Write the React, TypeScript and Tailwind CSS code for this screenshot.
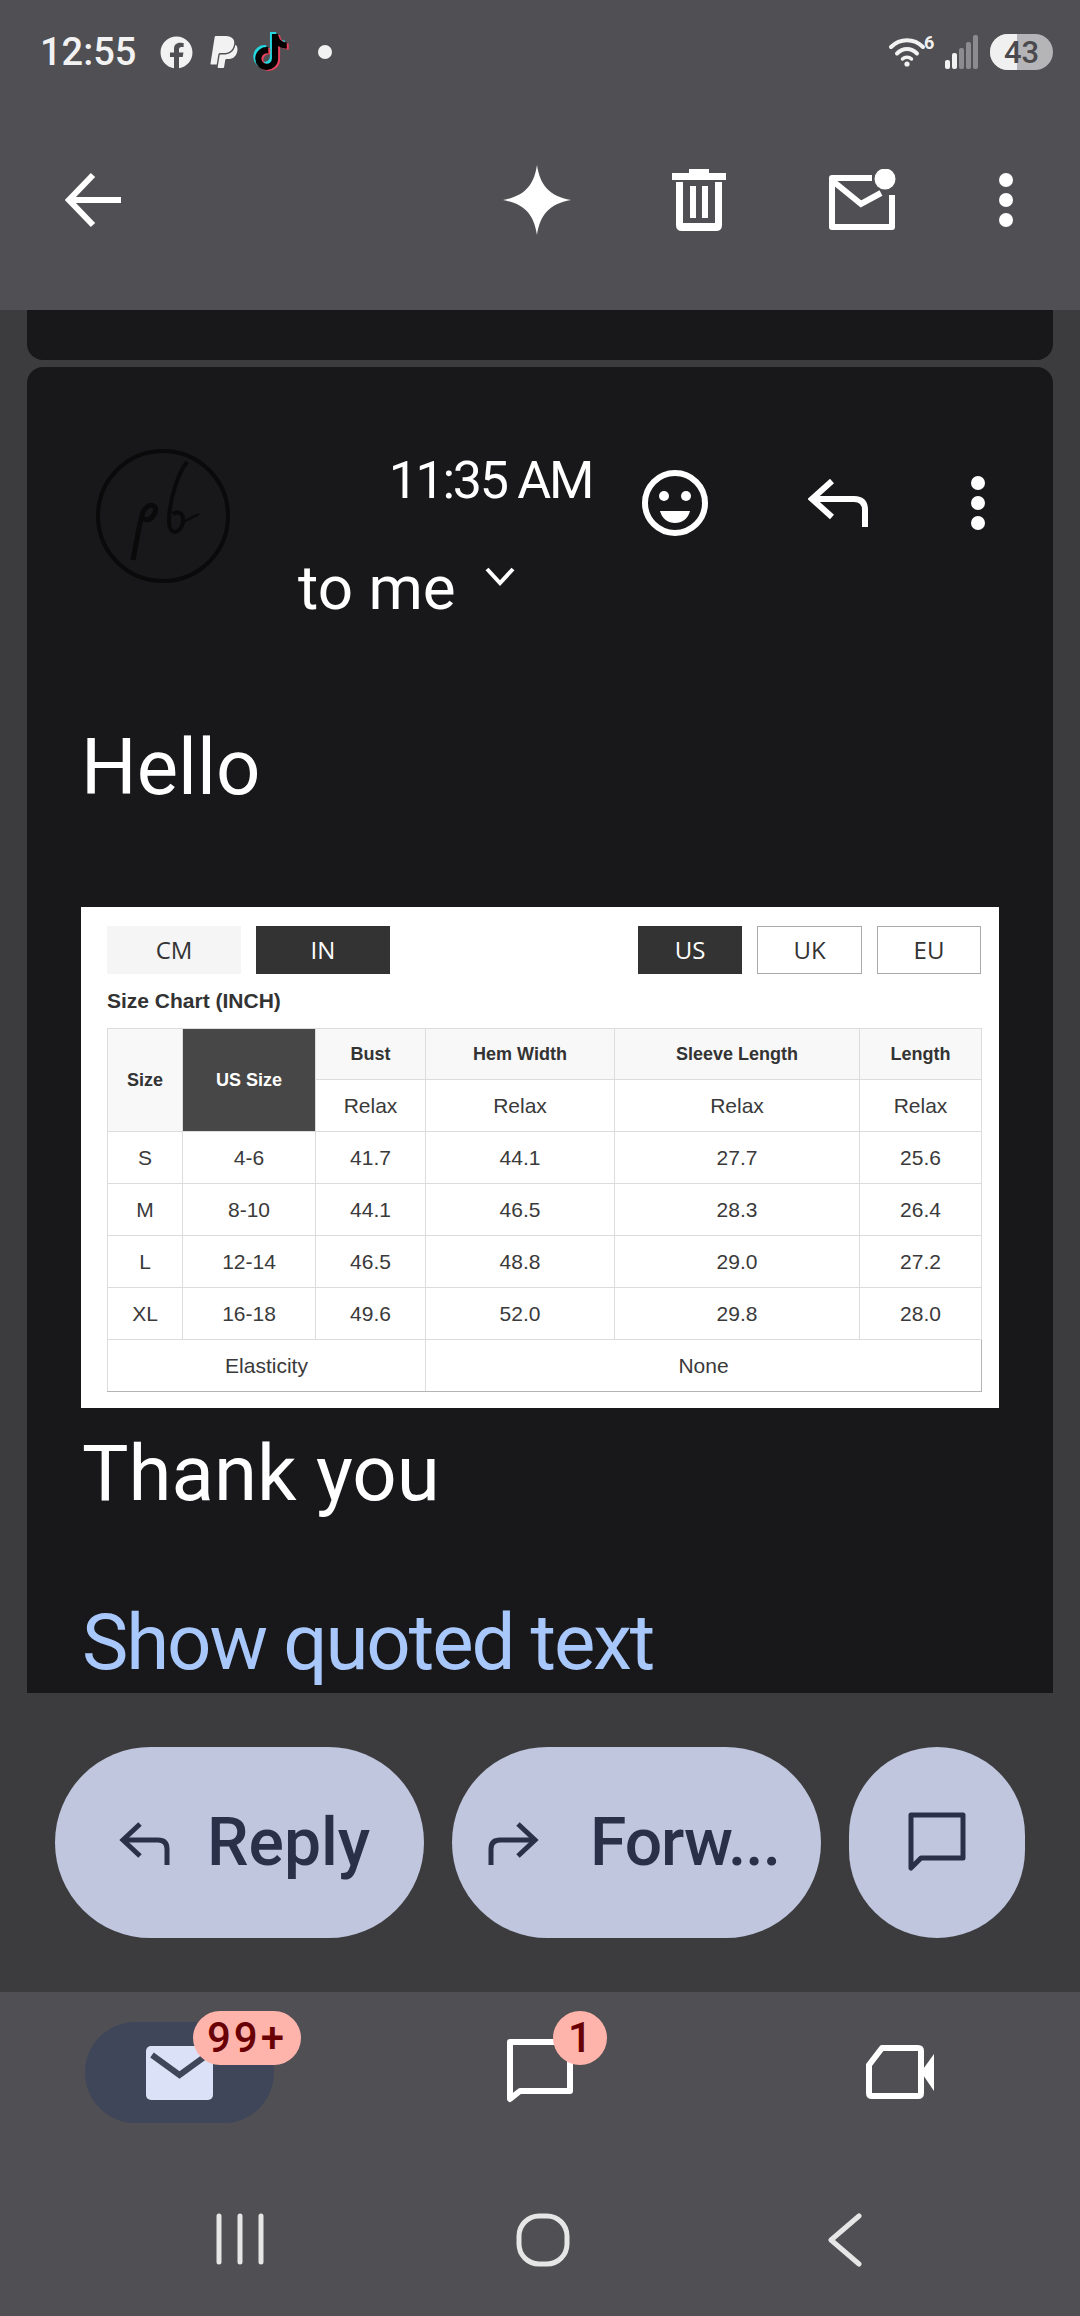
import { FaFacebook, FaPaypal, FaTiktok } from "react-icons/fa";

const ROWS = [
  ["S", "4-6", "41.7", "44.1", "27.7", "25.6"],
  ["M", "8-10", "44.1", "46.5", "28.3", "26.4"],
  ["L", "12-14", "46.5", "48.8", "29.0", "27.2"],
  ["XL", "16-18", "49.6", "52.0", "29.8", "28.0"],
];

function Dots({ className }: { className?: string }) {
  return (
    <svg viewBox="0 0 14 54" className={className} fill="currentColor">
      <circle cx="7" cy="7" r="7" />
      <circle cx="7" cy="27" r="7" />
      <circle cx="7" cy="47" r="7" />
    </svg>
  );
}

function StatusBar() {
  return (
    <div className="flex h-[104px] items-center pl-[40px] pr-[27px] text-[#f2f2f2]">
      <span className="w-[120px] font-['Roboto',sans-serif] text-[38px] font-medium leading-none">12:55</span>
      <FaFacebook className="h-[33px] w-[33px]" />
      <FaPaypal className="ml-[17px] h-[36px] w-[28px]" />
      {/* tiktok note: cyan and red copies sit behind the black one */}
      <div className="relative ml-[16px] h-[38px] w-[34px]">
        <FaTiktok className="absolute left-[-1px] top-[-1px] h-[36px] w-[32px] text-[#25d8e0]" />
        <FaTiktok className="absolute left-[3px] top-[2px] h-[36px] w-[32px] text-[#e8425c]" />
        <FaTiktok className="absolute left-[1px] top-[1px] h-[36px] w-[32px] text-black" />
      </div>
      <div className="ml-[30px] h-[14px] w-[14px] rounded-full bg-[#f2f2f2]" />
      <div className="relative ml-auto h-[34px] w-[48px]">
        <svg viewBox="0 0 38 34" className="h-[34px] w-[38px]" fill="none" stroke="currentColor" strokeLinecap="round">
          <path d="M3 12 C 12 3, 26 3, 35 12" strokeWidth="4" />
          <path d="M9 18.5 C 15 12.5, 23 12.5, 29 18.5" strokeWidth="4" />
          <path d="M14.5 24 C 17 21.5, 21 21.5, 23.5 24" strokeWidth="3.5" />
          <circle cx="19" cy="29" r="2.6" fill="currentColor" stroke="none" />
        </svg>
        <span className="absolute left-[36px] top-[-2px] font-['Roboto',sans-serif] text-[18px] font-bold leading-[20px]">6</span>
      </div>
      <svg viewBox="0 0 33 34" className="ml-[9px] h-[34px] w-[33px]">
        <rect x="0" y="25" width="5" height="9" rx="2" fill="#f2f2f2" />
        <rect x="7" y="18" width="5" height="16" rx="2" fill="#f2f2f2" />
        <rect x="14" y="13" width="5" height="21" rx="2" fill="#8c8c90" />
        <rect x="21" y="7" width="5" height="27" rx="2" fill="#8c8c90" />
        <rect x="28" y="0" width="5" height="34" rx="2" fill="#8c8c90" />
      </svg>
      <div className="relative ml-[12px] flex h-[36px] w-[63px] items-center justify-center overflow-hidden rounded-full bg-[#b5b5b8] font-['Roboto',sans-serif] text-[31px] font-medium text-[#4a4a4e]">
        <div className="absolute inset-y-0 left-0 w-[27px] bg-[#f0f0f0]" />
        <span className="relative leading-none">43</span>
      </div>
    </div>
  );
}

function Toolbar() {
  return (
    <div className="flex h-[192px] items-center text-white">
      <svg viewBox="0 0 56 56" className="ml-[65px] h-[56px] w-[56px]" fill="none" stroke="currentColor" strokeWidth="6">
        <path d="M28 3 L4 28 L28 53" />
        <path d="M4 28 H56" />
      </svg>
      <svg viewBox="0 0 68 70" className="ml-[382px] h-[70px] w-[68px]" fill="currentColor">
        <path d="M34 0 C 37 20 46 31 68 35 C 46 39 37 50 34 70 C 31 50 22 39 0 35 C 22 31 31 20 34 0 Z" />
      </svg>
      <svg viewBox="0 0 56 62" className="ml-[100px] h-[62px] w-[56px]" fill="currentColor">
        <path d="M18 0 H38 V4 H55 V11 H1 V4 H18 Z" />
        <path d="M5 13 H12 V54 H44 V13 H51 V56 Q51 62 45 62 H11 Q5 62 5 56 Z" />
        <rect x="19" y="17" width="6" height="32" />
        <rect x="31" y="17" width="6" height="32" />
      </svg>
      <svg viewBox="0 0 70 62" className="ml-[102px] h-[62px] w-[70px]" fill="none" stroke="currentColor" strokeWidth="6">
        <path d="M43 9 H3 V58 H63 V26" strokeLinejoin="round" />
        <path d="M5 13 L32 35 L52 24" />
        <circle cx="56" cy="10" r="10.5" fill="currentColor" stroke="none" />
      </svg>
      <Dots className="ml-[100px] h-[54px] w-[14px]" />
    </div>
  );
}

function SizeChart() {
  const th = "border border-[#dcdcdc] bg-[#f8f8f8] p-0 text-[18px] font-bold text-[#333]";
  const td = "border border-[#dcdcdc] p-0 text-[21px] font-normal text-[#3a3a3a]";
  return (
    <div className="mx-[54px] mt-[94px] flex h-[501px] flex-col bg-white pl-[26px] pr-[18px] pt-[19px] font-['Liberation_Sans',sans-serif]">
      <div className="flex h-[48px] font-['Open_Sans',sans-serif] text-[24px]">
        <div className="flex w-[134px] items-center justify-center bg-[#f5f5f5] text-[#333]">CM</div>
        <div className="ml-[15px] flex w-[134px] items-center justify-center bg-[#333] text-white">IN</div>
        <div className="ml-auto flex w-[104px] items-center justify-center bg-[#333] text-white">US</div>
        <div className="ml-[15px] flex w-[105px] items-center justify-center border border-[#aaa] text-[#333]">UK</div>
        <div className="ml-[15px] flex w-[104px] items-center justify-center border border-[#aaa] text-[#333]">EU</div>
      </div>
      <div className="mt-[13px] h-[27px] text-[21px] font-bold leading-[27px] text-[#333]">Size Chart (INCH)</div>
      <table className="mt-[14px] h-[364px] w-[874px] table-fixed border-collapse text-center">
        <colgroup>
          <col className="w-[75px]" />
          <col className="w-[133px]" />
          <col className="w-[110px]" />
          <col className="w-[189px]" />
          <col className="w-[245px]" />
          <col className="w-[122px]" />
        </colgroup>
        <tbody>
          <tr className="h-[51px]">
            <th rowSpan={2} className={th}>Size</th>
            <th rowSpan={2} className="border border-[#dcdcdc] bg-[#474747] p-0 text-[18px] font-bold text-white">US Size</th>
            <th className={th}>Bust</th>
            <th className={th}>Hem Width</th>
            <th className={th}>Sleeve Length</th>
            <th className={th}>Length</th>
          </tr>
          <tr className="h-[52px]">
            <td className={td}>Relax</td>
            <td className={td}>Relax</td>
            <td className={td}>Relax</td>
            <td className={td}>Relax</td>
          </tr>
          {ROWS.map((row) => (
            <tr key={row[0]} className="h-[52px]">
              {row.map((cell, i) => (
                <td key={i} className={td}>{cell}</td>
              ))}
            </tr>
          ))}
          <tr className="h-[52px]">
            <td colSpan={3} className="border border-[#dcdcdc] border-b-[#b4b4b4] p-0 text-[21px] text-[#3a3a3a]">Elasticity</td>
            <td colSpan={3} className="border border-[#dcdcdc] border-b-[#b4b4b4] border-r-[#b4b4b4] p-0 text-[21px] text-[#3a3a3a]">None</td>
          </tr>
        </tbody>
      </table>
    </div>
  );
}

function MessageCard() {
  return (
    <div className="mx-[27px] mt-[7px] h-[1326px] overflow-hidden rounded-t-[16px] bg-[#18181b] font-['Roboto',sans-serif] text-white">
      <div className="flex pl-[68px] pt-[81px]">
        {/* sender avatar, a near black disc with a signature */}
        <svg viewBox="0 0 136 136" className="h-[136px] w-[136px] shrink-0 blur-[0.6px]" fill="none" stroke="#0a0a0b">
          <circle cx="68" cy="68" r="65" strokeWidth="4" />
          <path d="M38 112 C 42 92 44 76 48 64 C 54 52 66 58 58 68 C 54 74 48 72 46 68" strokeWidth="5" />
          <path d="M92 14 C 84 24 74 50 74 74 C 74 88 86 86 88 74 C 89 66 84 62 78 66" strokeWidth="4" />
          <path d="M88 74 L 104 66" strokeWidth="2" />
        </svg>
        <div className="ml-[67px] w-[294px] pt-[3px]">
          <div className="text-right text-[52px] leading-[60px] tracking-[-2.3px]">11:35 AM</div>
          <div className="mt-[39px] flex text-[62px] leading-[76px]">
            to me
            <svg viewBox="0 0 30 20" className="ml-[29px] mt-[17px] h-[20px] w-[30px]" fill="none" stroke="currentColor" strokeWidth="4">
              <path d="M2 2 L15 16 L28 2" />
            </svg>
          </div>
        </div>
        <div className="mt-[22px] flex h-[66px] items-center pl-[50px]">
          <svg viewBox="0 0 66 66" className="h-[66px] w-[66px]" fill="none" stroke="currentColor" strokeWidth="6">
            <circle cx="33" cy="33" r="30" />
            <circle cx="22" cy="26" r="5" fill="currentColor" stroke="none" />
            <circle cx="44" cy="26" r="5" fill="currentColor" stroke="none" />
            <path d="M18 41 H48 C 46 49 40 53 33 53 C 26 53 20 49 18 41 Z" fill="currentColor" stroke="none" />
          </svg>
          <svg viewBox="0 0 60 48" className="ml-[100px] h-[48px] w-[60px]" fill="none" stroke="currentColor" strokeWidth="6">
            <path d="M24 2 L4 20 L24 38" />
            <path d="M4 20 H46 Q57 20 57 31 V48" />
          </svg>
          <Dots className="ml-[103px] h-[54px] w-[14px]" />
        </div>
      </div>
      <div className="mt-[97px] pl-[54px] text-[78px] leading-[90px]">Hello</div>
      <SizeChart />
      <div className="mt-[21px] pl-[55px] text-[78px] leading-[90px]">Thank you</div>
      <div className="mt-[79px] pl-[55px] text-[78px] leading-[90px] tracking-[-2.1px] text-[#a8c7fa]">Show quoted text</div>
    </div>
  );
}

function ActionButtons() {
  return (
    <div className="flex flex-1 items-start gap-[28px] pl-[55px] pt-[54px] font-['Roboto',sans-serif] text-[#2a3047]">
      <div className="flex h-[191px] w-[369px] items-center rounded-full bg-[#bfc6de] pl-[63px]">
        <svg viewBox="0 0 52 44" className="h-[44px] w-[52px]" fill="none" stroke="currentColor" strokeWidth="5">
          <path d="M22 3 L5 19 L22 35" />
          <path d="M5 19 H40 Q49 19 49 28 V44" />
        </svg>
        <span className="ml-[37px] text-[66px] font-medium">Reply</span>
      </div>
      <div className="flex h-[191px] w-[369px] items-center rounded-full bg-[#bfc6de] pl-[36px]">
        <svg viewBox="0 0 52 44" className="h-[44px] w-[52px]" fill="none" stroke="currentColor" strokeWidth="5">
          <path d="M30 3 L47 19 L30 35" />
          <path d="M47 19 H12 Q3 19 3 28 V44" />
        </svg>
        <span className="ml-[50px] text-[66px] font-medium tracking-[-1px]">Forw...</span>
      </div>
      <div className="flex h-[191px] w-[176px] items-center justify-center rounded-full bg-[#bfc6de]">
        <svg viewBox="0 0 58 62" className="h-[62px] w-[58px]" fill="none" stroke="currentColor" strokeWidth="5">
          <path d="M3 56 V3 H55 V46 H13 Z" strokeLinejoin="round" />
        </svg>
      </div>
    </div>
  );
}

function BottomNav() {
  return (
    <div className="h-[324px] bg-[#4f4f54]">
      <div className="flex h-[221px] items-start pl-[85px] pt-[30px] font-['Roboto',sans-serif] text-white">
        <div className="relative flex h-[101px] w-[189px] items-center justify-center rounded-full bg-[#3f465a]">
          <svg viewBox="0 0 67 54" className="h-[54px] w-[67px]">
            <rect width="67" height="54" rx="5" fill="#dbe2f8" />
            <path d="M6 9 L33.5 29 L61 9" fill="none" stroke="#3f465a" strokeWidth="6" />
          </svg>
          <span className="absolute left-[108px] top-[-11px] flex h-[54px] w-[108px] items-center justify-center rounded-full bg-[#ffb4ab] text-[42px] font-medium leading-none tracking-[3px] text-[#690005]">99+</span>
        </div>
        <div className="relative ml-[233px] mt-[17px] h-[67px] w-[66px]">
          <svg viewBox="0 0 66 67" className="h-[67px] w-[66px]" fill="none" stroke="currentColor" strokeWidth="6">
            <path d="M3 60 V3 H63 V52 H13 Z" strokeLinejoin="round" />
          </svg>
          <span className="absolute left-[46px] top-[-28px] flex h-[54px] w-[54px] items-center justify-center rounded-full bg-[#ffb4ab] text-[42px] font-medium leading-none text-[#690005]">1</span>
        </div>
        <svg viewBox="0 0 68 54" className="ml-[293px] mt-[23px] h-[54px] w-[68px]" fill="none" stroke="currentColor" strokeWidth="6">
          <path d="M16 3 H52 Q55 3 55 6 V48 Q55 51 52 51 H6 Q3 51 3 48 V20 Z" strokeLinejoin="round" />
          <path d="M55 27 L68 9 V46 Z" fill="currentColor" stroke="none" />
        </svg>
      </div>
      <div className="flex items-start text-[#e6e6e6]">
        <svg viewBox="0 0 48 52" className="ml-[216px] h-[52px] w-[48px]" fill="none" stroke="currentColor" strokeWidth="5" strokeLinecap="round">
          <path d="M3 3 V49 M24 3 V49 M45 3 V49" />
        </svg>
        <svg viewBox="0 0 54 54" className="ml-[252px] h-[54px] w-[54px]" fill="none" stroke="currentColor" strokeWidth="5">
          <rect x="3" y="3" width="48" height="48" rx="20" />
        </svg>
        <svg viewBox="0 0 34 54" className="ml-[258px] h-[54px] w-[34px]" fill="none" stroke="currentColor" strokeWidth="5" strokeLinecap="round" strokeLinejoin="round">
          <path d="M31 3 L3 27 L31 51" />
        </svg>
      </div>
    </div>
  );
}

export default function App() {
  return (
    <div className="flex h-[2316px] w-[1080px] flex-col overflow-hidden bg-[#3c3c3f]">
      <div className="h-[310px] bg-[#4f4f54]">
        <StatusBar />
        <Toolbar />
      </div>
      <div className="mx-[27px] h-[50px] rounded-b-[16px] bg-[#18181b]" />
      <MessageCard />
      <ActionButtons />
      <BottomNav />
    </div>
  );
}
